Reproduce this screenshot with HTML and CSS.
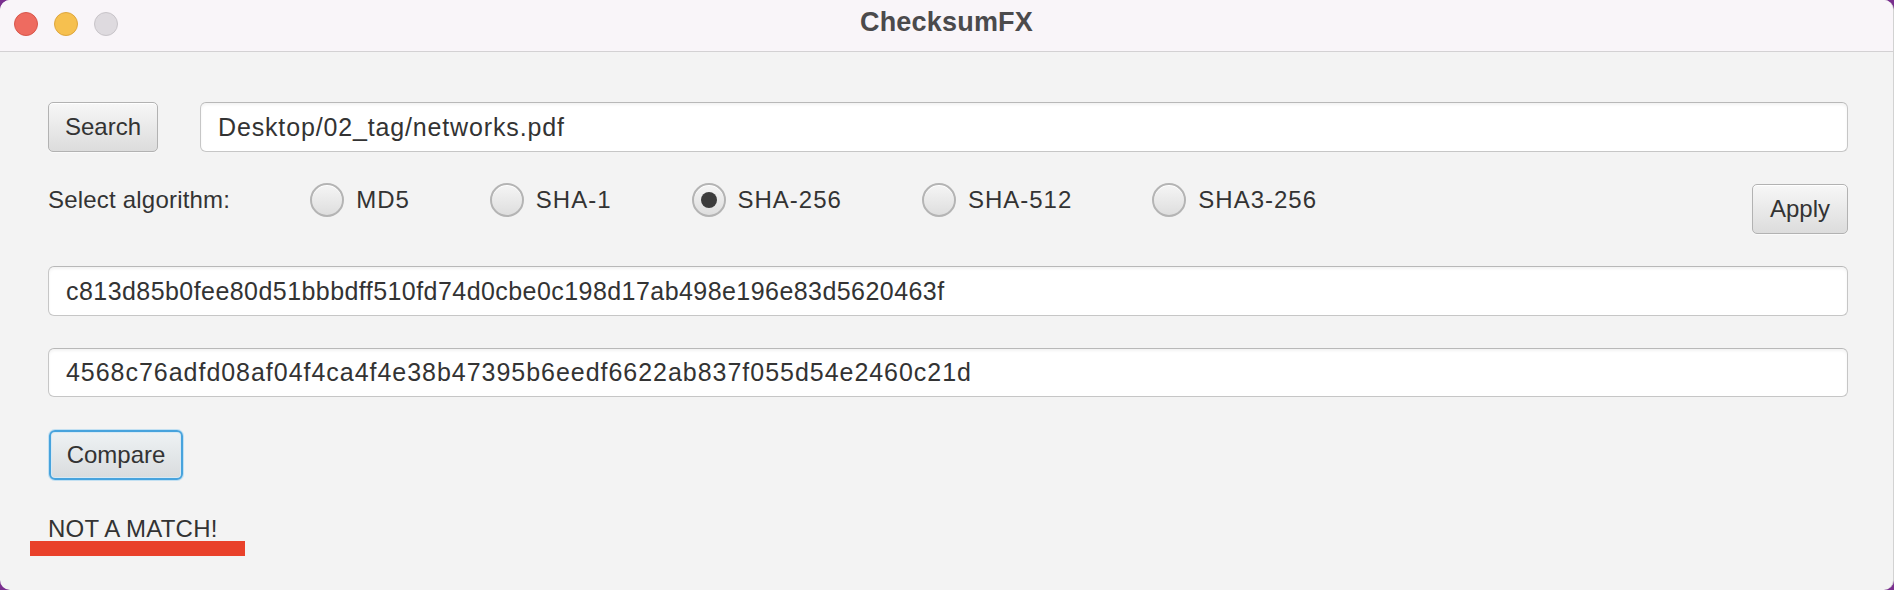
FILE: index.html
```html
<!DOCTYPE html>
<html lang="en">
<head>
<meta charset="utf-8">
<title>ChecksumFX</title>
<link rel="stylesheet" href="styles.css">
</head>
<body>
<div class="window">
  <header class="titlebar">
    <div class="lights">
      <span class="light light-close"></span>
      <span class="light light-min"></span>
      <span class="light light-max"></span>
    </div>
    <div class="title">ChecksumFX</div>
    <div class="title-spacer"></div>
  </header>
  <main class="content">
    <div class="row row-file">
      <button class="btn btn-search">Search</button>
      <div class="field field-path">Desktop/02_tag/networks.pdf</div>
    </div>
    <div class="row row-algo">
      <span class="algo-label">Select algorithm:</span>
      <div class="radios">
        <div class="radio"><span class="radio-circle"></span><span class="radio-text">MD5</span></div>
        <div class="radio"><span class="radio-circle"></span><span class="radio-text">SHA-1</span></div>
        <div class="radio"><span class="radio-circle is-selected"></span><span class="radio-text">SHA-256</span></div>
        <div class="radio"><span class="radio-circle"></span><span class="radio-text">SHA-512</span></div>
        <div class="radio"><span class="radio-circle"></span><span class="radio-text">SHA3-256</span></div>
      </div>
      <button class="btn btn-apply">Apply</button>
    </div>
    <div class="field field-hash field-hash-1">c813d85b0fee80d51bbbdff510fd74d0cbe0c198d17ab498e196e83d5620463f</div>
    <div class="field field-hash field-hash-2">4568c76adfd08af04f4ca4f4e38b47395b6eedf6622ab837f055d54e2460c21d</div>
    <button class="btn btn-compare">Compare</button>
    <div class="result">NOT A MATCH!</div>
    <div class="annot-line"></div>
  </main>
</div>
</body>
</html>
```

FILE: styles.css
```css
* { box-sizing: border-box; }

html, body {
  margin: 0;
  padding: 0;
}

body {
  width: 1894px;
  height: 590px;
  background: #7a2f8f;
  font-family: "Liberation Sans", Arial, sans-serif;
  color: #333333;
  overflow: hidden;
}

.window {
  width: 1894px;
  height: 590px;
  background: #f3f3f3;
  border-radius: 10px;
  border-right: 1px solid #d2d2d2;
  overflow: hidden;
  display: flex;
  flex-direction: column;
}

/* ---------- title bar ---------- */
.titlebar {
  height: 52px;
  flex: 0 0 52px;
  background: #f9f5f9;
  border-bottom: 1px solid #d3d1d3;
  display: grid;
  grid-template-columns: 1fr auto 1fr;
  align-items: center;
  padding-bottom: 6px;
}

.lights {
  display: flex;
  gap: 16px;
  padding-left: 14px;
  padding-top: 2px;
}

.light {
  width: 24px;
  height: 24px;
  border-radius: 50%;
  display: block;
}

.light-close { background: #ee6b60; border: 1px solid #d8564b; }
.light-min   { background: #f6c04f; border: 1px solid #dea63e; }
.light-max   { background: #dedadf; border: 1px solid #c8c4c9; }

.title {
  font-weight: bold;
  font-size: 27px;
  color: #4b4a4c;
  letter-spacing: 0.2px;
}

/* ---------- content ---------- */
.content {
  flex: 1;
  padding: 50px 45px 0 48px;
  display: flex;
  flex-direction: column;
  align-items: stretch;
}

.row {
  display: flex;
}

.row-file {
  height: 50px;
  gap: 42px;
}

.row-algo {
  margin-top: 31px;
  align-items: flex-start;
  height: 51px;
}

.algo-label {
  font-size: 24px;
  line-height: 34px;
  letter-spacing: 0.2px;
  white-space: nowrap;
}

.radios {
  display: flex;
  gap: 80px;
  margin-left: 80px;
}

.radio {
  display: flex;
  align-items: center;
  gap: 12px;
  height: 34px;
}

.radio-circle {
  width: 34px;
  height: 34px;
  border-radius: 50%;
  border: 2px solid #b4b4b4;
  background: linear-gradient(#f5f5f5, #dedede);
  box-shadow: inset 0 1px 0 #ffffff;
  display: flex;
  align-items: center;
  justify-content: center;
}

.radio-circle.is-selected::after {
  content: "";
  width: 16px;
  height: 16px;
  border-radius: 50%;
  background: #3c3c3c;
}

.radio-text {
  font-size: 24px;
  letter-spacing: 1px;
  white-space: nowrap;
}

/* ---------- buttons ---------- */
.btn {
  font-family: "Liberation Sans", Arial, sans-serif;
  font-size: 24px;
  color: #333333;
  background: linear-gradient(#f7f7f7, #dcdcdc);
  border: 1px solid #b2b2b2;
  border-radius: 5px;
  box-shadow: inset 0 1px 0 #ffffff, 0 1px 0 rgba(255,255,255,0.6);
  padding: 0;
  margin: 0;
  display: flex;
  align-items: center;
  justify-content: center;
}

.btn-search {
  width: 110px;
  height: 50px;
  flex: 0 0 110px;
}

.btn-apply {
  width: 96px;
  height: 50px;
  margin-left: auto;
  margin-top: 1px;
}

.btn-compare {
  width: 134px;
  height: 50px;
  margin: 33px 0 0 1px;
  align-self: flex-start;
  border: 2px solid #47a3dd;
  border-radius: 6px;
  background: linear-gradient(#eef2f4, #d9dcde);
  box-shadow: inset 0 0 0 1px #d7e9f4, 0 0 0 1px #c2e0f2;
}

/* ---------- text fields ---------- */
.field {
  background: #ffffff;
  border: 1px solid #c6c6c6;
  border-top-color: #b8b8b8;
  border-radius: 6px;
  box-shadow: inset 0 2px 3px rgba(0,0,0,0.05);
  font-size: 25px;
  letter-spacing: 0.75px;
  color: #333333;
  display: flex;
  align-items: center;
  padding-left: 17px;
  white-space: nowrap;
}

.field-path {
  flex: 1;
  height: 50px;
  letter-spacing: 0.85px;
}

.field-hash-1 {
  margin-top: 32px;
  height: 50px;
  letter-spacing: 0.44px;
}

.field-hash-2 {
  margin-top: 32px;
  height: 49px;
  letter-spacing: 0.97px;
}

/* ---------- result ---------- */
.result {
  margin-top: 36px;
  font-size: 24px;
  line-height: 26px;
  letter-spacing: 0.2px;
  color: #333333;
}

.annot-line {
  margin-top: -1px;
  margin-left: -18px;
  width: 215px;
  height: 15px;
  background: #e9412a;
}
```
